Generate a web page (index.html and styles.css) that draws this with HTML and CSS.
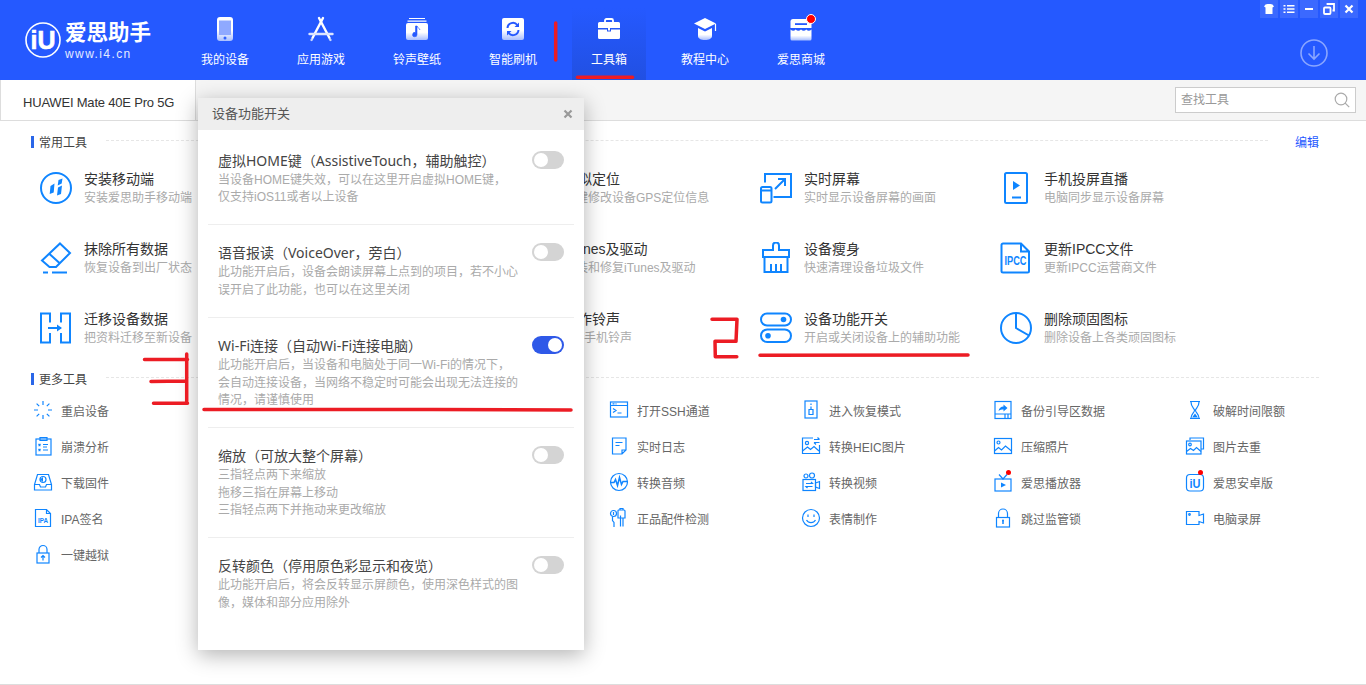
FILE: index.html
```html
<!DOCTYPE html>
<html lang="zh-CN">
<head>
<meta charset="UTF-8">
<meta name="viewport" content="width=device-width, initial-scale=1.0">
<title>爱思助手</title>
<link rel="stylesheet" href="styles.css">
</head>
<body>
<svg class="defs" width="0" height="0">
  <defs>
    <linearGradient id="navFade" x1="0" y1="0" x2="0" y2="1">
      <stop offset="0" stop-color="#fff"/>
      <stop offset="0.55" stop-color="#fff"/>
      <stop offset="1" stop-color="#a9bfff"/>
    </linearGradient>
  </defs>
</svg>

<header class="topbar">
  <div class="logo">
    <svg class="logo-mark" viewBox="0 0 36 36">
      <circle cx="18" cy="18" r="17" fill="none" stroke="#fff" stroke-width="1.600"/>
      <text x="18" y="27" text-anchor="middle" textLength="25" lengthAdjust="spacingAndGlyphs" class="logo-letters">iU</text>
    </svg>
    <div class="logo-text">
      <div class="logo-name">爱思助手</div>
      <div class="logo-url">www.i4.cn</div>
    </div>
  </div>
  <nav class="nav">
    <a class="nav-item">
      <svg viewBox="0 0 28 28"><rect x="6" y="2" width="16" height="24" rx="3" fill="url(#navFade)"/><rect x="8" y="5.500" width="12" height="14.500" fill="#8fa9ff"/><circle cx="14" cy="23" r="1.500" fill="#2f62ff"/></svg>
      <span>我的设备</span>
    </a>
    <a class="nav-item">
      <svg viewBox="0 0 28 28" fill="none" stroke-width="2.400" stroke-linecap="round"><path d="M16 3L5.500 23" stroke="#fff"/><path d="M12 3l10.500 20" stroke="#fff"/><path d="M2.500 19h23" stroke="#dbe4ff"/><path d="M5 24.500l-.5.500M23 24.500l.5.500" stroke="#c6d4ff"/></svg>
      <span>应用游戏</span>
    </a>
    <a class="nav-item">
      <svg viewBox="0 0 28 28"><path d="M6 3h16v1H6zM4.500 5.500h19v1.200h-19z" fill="#fff"/><rect x="3" y="8" width="22" height="17" rx="2" fill="url(#navFade)"/><path d="M14 11v8.500a2.200 2.200 0 1 1-1.500-2V11zM14 11c.5 2 2.500 2 3 4" fill="#2559ff" stroke="#2559ff" stroke-width=".6"/></svg>
      <span>铃声壁纸</span>
    </a>
    <a class="nav-item">
      <svg viewBox="0 0 28 28"><rect x="3" y="3" width="22" height="22" rx="2" fill="url(#navFade)"/><path d="M8.500 13a5.500 5.500 0 0 1 9.800-3M19.500 15a5.500 5.500 0 0 1-9.800 3" fill="none" stroke="#2559ff" stroke-width="2"/><path d="M20 7.500v4.500h-4.500zM8 20.500V16h4.500z" fill="#2559ff"/></svg>
      <span>智能刷机</span>
    </a>
    <a class="nav-item is-active">
      <svg viewBox="0 0 28 28"><path d="M10 7V5.500A1.500 1.500 0 0 1 11.500 4h5A1.500 1.500 0 0 1 18 5.500V7" fill="none" stroke="#fff" stroke-width="1.800"/><path d="M4.500 7h19A1.500 1.500 0 0 1 25 8.500V13H3V8.500A1.500 1.500 0 0 1 4.500 7zM3 14.500h9v2h4v-2h9v8A1.500 1.500 0 0 1 23.500 24h-19A1.500 1.500 0 0 1 3 22.500z" fill="#fff"/><rect x="13" y="12" width="2" height="3.500" fill="#fff"/></svg>
      <span>工具箱</span>
    </a>
    <a class="nav-item">
      <svg viewBox="0 0 28 28"><path d="M14 3l11 5.500L14 14 3 8.500z" fill="#fff"/><path d="M7 13l7 3.500 7-3.500v8c0 2.500-3 4-7 4s-7-1.500-7-4z" fill="url(#navFade)"/><path d="M24.500 9v7" stroke="#fff" stroke-width="1.200"/></svg>
      <span>教程中心</span>
    </a>
    <a class="nav-item">
      <svg viewBox="0 0 28 28"><path d="M6 4h16a2.500 2.500 0 0 1 2.500 2.500V13H3.500V6.500A2.500 2.500 0 0 1 6 4z" fill="#fff"/><rect x="8" y="8.200" width="12" height="1.800" fill="#2559ff"/><path d="M3.500 14.500c2 1.800 3.500 1.800 5.200 0 1.700 1.800 3.500 1.800 5.300 0 1.800 1.800 3.600 1.800 5.300 0 1.700 1.800 3.200 1.800 5.200 0V24a1.500 1.500 0 0 1-1.500 1.500H5A1.500 1.500 0 0 1 3.500 24z" fill="url(#navFade)"/></svg>
      <span>爱思商城</span>
      <i class="nav-dot"></i>
    </a>
  </nav>
  <div class="top-right">
    <div class="win-btns">
      <span class="win-btn"><svg viewBox="0 0 18 18"><path d="M5.500 4.500l2-.5h3l2 .5 1.500 2-1.500 1V14h-7V7.500L4 6.500z" fill="#fff"/></svg></span>
      <span class="win-btn"><svg viewBox="0 0 18 18"><path d="M3.500 5h2v1.600h-2zM7 5h7.500v1.600H7zM3.500 8.200h2v1.600h-2zM7 8.200h7.500v1.600H7zM3.500 11.400h2V13h-2zM7 11.400h7.500V13H7z" fill="#fff"/></svg></span>
      <span class="win-btn"><svg viewBox="0 0 18 18"><rect x="5" y="8" width="8" height="2" fill="#fff"/></svg></span>
      <span class="win-btn"><svg viewBox="0 0 18 18" fill="none" stroke="#fff" stroke-width="1.800"><rect x="4" y="7.500" width="6.500" height="6.500" rx="1"/><path d="M7.500 5V4h6.500v6.500h-1.500"/></svg></span>
      <span class="win-btn"><svg viewBox="0 0 18 18"><path d="M5.500 5.500l7 7M12.500 5.500l-7 7" stroke="#fff" stroke-width="2.200"/></svg></span>
    </div>
    <svg class="download" viewBox="0 0 28 28" fill="none" stroke="#8aa6ff" stroke-width="1.600"><circle cx="14" cy="14" r="13"/><path d="M14 7v13M8.500 14.500L14 20l5.500-5.500"/></svg>
  </div>
</header>

<div class="tabbar">
  <div class="tab">HUAWEI Mate 40E Pro 5G</div>
  <div class="search">
    <span class="search-hint">查找工具</span>
    <svg viewBox="0 0 16 16" fill="none" stroke="#aaa" stroke-width="1.200"><circle cx="7" cy="7" r="5.800"/><path d="M11.200 11.200l4 4"/></svg>
  </div>
</div>

<main class="main">
  <div class="sec-head">
    <span class="sec-tick"></span><span class="sec-name">常用工具</span><span class="sec-dash"></span><a class="sec-edit">编辑</a>
  </div>
  <div class="big-grid">
    <div class="tool">
      <svg viewBox="0 0 32 32" fill="none" stroke="#0f85ff" stroke-width="2"><circle cx="16" cy="16" r="15"/><path d="M10.500 14l4-2.500-.8 9-4 1.500zM18.500 8l4-1.500-.8 5-4 2zM18 15.500l4-2-1 8.500-4 1.500z" fill="#0f85ff" stroke="none"/></svg>
      <div><div class="tool-name">安装移动端</div><div class="tool-desc">安装爱思助手移动端</div></div>
    </div>
    <div class="tool"></div>
    <div class="tool">
      <div class="tool-gap"></div>
      <div><div class="tool-name">虚拟定位</div><div class="tool-desc">一键修改设备GPS定位信息</div></div>
    </div>
    <div class="tool">
      <svg viewBox="0 0 32 32" fill="none" stroke="#0f85ff" stroke-width="2"><path d="M5 10.500V2h26v23H13.500"/><path d="M15 17L25 7M18 7h7v7"/><rect x="1" y="15" width="10.500" height="15.500" rx="1.500"/><path d="M1 18.500h10.500"/></svg>
      <div><div class="tool-name">实时屏幕</div><div class="tool-desc">实时显示设备屏幕的画面</div></div>
    </div>
    <div class="tool">
      <svg viewBox="0 0 32 32" fill="none" stroke="#0f85ff" stroke-width="2"><rect x="5" y="1" width="22" height="30" rx="1.500"/><path d="M13 9l7 4.500-7 4.500z" fill="#0f85ff" stroke="none"/><path d="M12 25.500h9"/></svg>
      <div><div class="tool-name">手机投屏直播</div><div class="tool-desc">电脑同步显示设备屏幕</div></div>
    </div>

    <div class="tool">
      <svg viewBox="0 0 32 32" fill="none" stroke="#0f85ff" stroke-width="2"><path d="M20 1.500l10 9.500-14 14H9.500L2 18.500zM9 11.500L20 21.500"/><path d="M3 30.500h5M12 30.500h15"/></svg>
      <div><div class="tool-name">抹除所有数据</div><div class="tool-desc">恢复设备到出厂状态</div></div>
    </div>
    <div class="tool"></div>
    <div class="tool">
      <div class="tool-gap"></div>
      <div><div class="tool-name">iTunes及驱动</div><div class="tool-desc">安装和修复iTunes及驱动</div></div>
    </div>
    <div class="tool">
      <svg viewBox="0 0 32 32" fill="none" stroke="#0f85ff" stroke-width="2"><path d="M13 8V3.500a3 3 0 0 1 6 0V8h10v7H3V8zM4.500 15v15h23V15"/><path d="M11 30v-8M16 30v-8M21 30v-8"/></svg>
      <div><div class="tool-name">设备瘦身</div><div class="tool-desc">快速清理设备垃圾文件</div></div>
    </div>
    <div class="tool">
      <svg viewBox="0 0 32 32" fill="none" stroke="#0f85ff" stroke-width="2"><path d="M3 1.500h18l8 8V29a1.500 1.500 0 0 1-1.500 1.500H3A1.500 1.500 0 0 1 1.500 29V3A1.500 1.500 0 0 1 3 1.500zM21 1.500v8h8"/><text x="15.500" y="23" text-anchor="middle" textLength="22" lengthAdjust="spacingAndGlyphs" class="icon-label">IPCC</text></svg>
      <div><div class="tool-name">更新IPCC文件</div><div class="tool-desc">更新IPCC运营商文件</div></div>
    </div>

    <div class="tool">
      <svg viewBox="0 0 32 32" fill="none" stroke="#0f85ff" stroke-width="2"><path d="M10 10.500v-9H1v29h9V21M21 10.500v-9h9v29h-9V21M8 16h13"/><path d="M17 12.500l5 3.500-5 3.500z" fill="#0f85ff" stroke="none"/></svg>
      <div><div class="tool-name">迁移设备数据</div><div class="tool-desc">把资料迁移至新设备</div></div>
    </div>
    <div class="tool"></div>
    <div class="tool">
      <div class="tool-gap"></div>
      <div><div class="tool-name">制作铃声</div><div class="tool-desc">DIY手机铃声</div></div>
    </div>
    <div class="tool">
      <svg viewBox="0 0 32 32" fill="none" stroke="#0f85ff" stroke-width="2"><rect x="1" y="1.500" width="30" height="12" rx="6"/><rect x="1" y="17.500" width="30" height="12.500" rx="6.200"/><circle cx="23.500" cy="7.500" r="2.800" fill="#0f85ff" stroke="none"/><circle cx="8" cy="23.700" r="2.800" fill="#0f85ff" stroke="none"/></svg>
      <div><div class="tool-name">设备功能开关</div><div class="tool-desc">开启或关闭设备上的辅助功能</div></div>
    </div>
    <div class="tool">
      <svg viewBox="0 0 32 32" fill="none" stroke="#0f85ff" stroke-width="2"><circle cx="16" cy="16" r="15"/><path d="M16 1v15l13 7.500"/></svg>
      <div><div class="tool-name">删除顽固图标</div><div class="tool-desc">删除设备上各类顽固图标</div></div>
    </div>
  </div>

  <div class="sec-head sec-more">
    <span class="sec-tick"></span><span class="sec-name">更多工具</span><span class="sec-dash"></span>
  </div>
  <div class="small-grid">
    <div class="mini">
      <svg viewBox="0 0 20 20"><path d="M10 1v4M10 15v4M1 10h4M15 10h4M3.600 3.600l2.600 2.600M13.800 13.800l2.600 2.600M3.600 16.400l2.600-2.600M13.800 6.200l2.600-2.600"/></svg>
      <span>重启设备</span>
    </div>
    <div class="mini"></div>
    <div class="mini"></div>
    <div class="mini">
      <svg viewBox="0 0 20 20"><rect x="1.500" y="2" width="17" height="15"/><path d="M1.500 5.500h17M3.500 3.800h2M6.500 3.800h1M4 8.500l3 2-3 2M8.500 13h4"/></svg>
      <span>打开SSH通道</span>
    </div>
    <div class="mini">
      <svg viewBox="0 0 20 20"><rect x="4" y="1" width="12" height="17"/><path d="M10 3.500v1.500M10 6.500v3M8 9.500h4v5H8z"/></svg>
      <span>进入恢复模式</span>
    </div>
    <div class="mini">
      <svg viewBox="0 0 20 20"><rect x="2" y="1.500" width="16" height="17"/><path d="M2 14h16M12 14v4.500M15 14v4.500"/><path d="M5.500 11c.5-3 2.500-4.500 5-4.500V4.500l4 3.500-4 3.500V9.500c-2 0-3.500.3-5 1.500z" class="ic-fill"/></svg>
      <span>备份引导区数据</span>
    </div>
    <div class="mini">
      <svg viewBox="0 0 20 20"><path d="M5 1.500h10M5 18.500h10M6 2c0 5 3 6 3.500 8S6 14 6 18M14 2c0 5-3 6-3.500 8S14 14 14 18"/><path d="M7 17.500l3-4 3 4z" class="ic-fill"/></svg>
      <span>破解时间限额</span>
    </div>

    <div class="mini">
      <svg viewBox="0 0 20 20"><rect x="3" y="3" width="15" height="16"/><path d="M7 1.500h7v3H7zM5.500 8l2 2M7.500 8l-2 2M5.500 13l2 2M7.500 13l-2 2M10 8.500h5M10 11h4M10 14h5"/></svg>
      <span>崩溃分析</span>
    </div>
    <div class="mini"></div>
    <div class="mini"></div>
    <div class="mini">
      <svg viewBox="0 0 20 20"><path d="M17 2H3.500v16H13l4-4zM13 18v-4h4M6.500 6.500h7M6.500 9.500h4"/></svg>
      <span>实时日志</span>
    </div>
    <div class="mini">
      <svg viewBox="0 0 20 20"><path d="M12 2H1.500v15.500h17V9"/><path d="M1.500 15l5-4 3 2.500 3.500-3 5 4.500"/><circle cx="6" cy="7" r="1.600"/><path d="M13 3.500h5.500M16.500 1.500l2 2M18.500 6.500H13M15 8.500l-2-2"/></svg>
      <span>转换HEIC图片</span>
    </div>
    <div class="mini">
      <svg viewBox="0 0 20 20"><rect x="1.500" y="2.500" width="17" height="15"/><circle cx="5.500" cy="6.500" r="1.500"/><path d="M1.500 15l4-3.500 3 2.500 4-4 6 5"/></svg>
      <span>压缩照片</span>
    </div>
    <div class="mini">
      <svg viewBox="0 0 20 20"><path d="M5 4V2h13.500v11H16"/><rect x="1.500" y="5" width="14.500" height="13"/><circle cx="5" cy="8.500" r="1.300"/><path d="M1.500 15.500l4-3 3 2 3-3 4.500 4"/></svg>
      <span>图片去重</span>
    </div>

    <div class="mini">
      <svg viewBox="0 0 20 20"><path d="M4.500 2.500h11l3 10V18h-17v-5.500zM1.500 12.500h5l1 2.500h5l1-2.500h5"/><circle cx="10" cy="7.500" r="3"/><path d="M7 7.500l3-2.500v5z" class="ic-fill"/></svg>
      <span>下载固件</span>
    </div>
    <div class="mini"></div>
    <div class="mini"></div>
    <div class="mini">
      <svg viewBox="0 0 20 20"><circle cx="10" cy="10" r="8.500"/><path d="M1.500 10.500H5l1.500-3 2 6 2-8 2 7 1.500-3h4.500" class="ic-thick"/></svg>
      <span>转换音频</span>
    </div>
    <div class="mini">
      <svg viewBox="0 0 20 20"><rect x="2" y="7.500" width="12.500" height="11"/><path d="M14.500 11l4-1.500v7l-4-1.500zM5 11.500h6.500l-1.500-1.500M11.500 14.500H5l1.500 1.500"/><circle cx="5" cy="4" r="2"/><circle cx="11" cy="3.500" r="2.500"/></svg>
      <span>转换视频</span>
    </div>
    <div class="mini has-dot">
      <svg viewBox="0 0 20 20"><rect x="2" y="7" width="16" height="12"/><path d="M6 2.500L10 7l4-4.500"/><path d="M8 10.500l5 2.500-5 2.500z" class="ic-fill"/></svg>
      <span>爱思播放器</span>
    </div>
    <div class="mini has-dot">
      <svg viewBox="0 0 20 20"><rect x="1.500" y="2.500" width="17" height="16.500" rx="3.500"/><text x="10" y="15.500" text-anchor="middle" textLength="11" lengthAdjust="spacingAndGlyphs" class="icon-label-sm">iU</text></svg>
      <span>爱思安卓版</span>
    </div>

    <div class="mini">
      <svg viewBox="0 0 20 20"><path d="M2.500 1.500h11l4 4v13h-15zM13.500 1.500v4h4"/><text x="10" y="14.500" text-anchor="middle" textLength="10" lengthAdjust="spacingAndGlyphs" class="icon-label-xs">IPA</text></svg>
      <span>IPA签名</span>
    </div>
    <div class="mini"></div>
    <div class="mini"></div>
    <div class="mini">
      <svg viewBox="0 0 20 20"><circle cx="4.500" cy="5.500" r="3"/><path d="M3.500 8.500v4l1.500 2v4.500M11.500 18.500v-11M9.500 2h5.500a1 1 0 0 1 1 1v7h-7V3a1 1 0 0 1 .5-1zM14 10v8.500M11 2V.5h3V2M4.500 4v3"/></svg>
      <span>正品配件检测</span>
    </div>
    <div class="mini">
      <svg viewBox="0 0 20 20"><circle cx="10" cy="10" r="8.500"/><path d="M7 6.500v2.500M13 6.500v2.500M5.500 12c2 3.500 7 3.500 9 0"/></svg>
      <span>表情制作</span>
    </div>
    <div class="mini">
      <svg viewBox="0 0 20 20"><path d="M5.500 9.500V5.500a4.500 4.500 0 0 1 9 0v4"/><rect x="3.500" y="9.500" width="13" height="9.500"/><path d="M10 12.500v3.500" class="ic-thick"/><circle cx="10" cy="12.500" r="1" class="ic-fill"/></svg>
      <span>跳过监管锁</span>
    </div>
    <div class="mini">
      <svg viewBox="0 0 20 20"><path d="M1.500 3.500h12.500v4l4.500-1.500v9L14 13.500v3H1.500z"/><circle cx="4.500" cy="6.500" r=".8"/></svg>
      <span>电脑录屏</span>
    </div>

    <div class="mini">
      <svg viewBox="0 0 20 20"><path d="M6 9V5.500a4 4 0 0 1 8 0V9"/><rect x="4" y="9" width="12" height="10"/><path d="M10 16.500v-4.500M8 13.500l2-2 2 2"/></svg>
      <span>一键越狱</span>
    </div>
  </div>
</main>

<section class="dialog">
  <div class="dlg-head">
    <span class="dlg-title">设备功能开关</span>
    <svg class="dlg-close" viewBox="0 0 10 10"><path d="M1.500 1.500l7 7M8.500 1.500l-7 7"/></svg>
  </div>
  <div class="opt">
    <div class="opt-text">
      <div class="opt-title">虚拟HOME键（AssistiveTouch，辅助触控）</div>
      <div class="opt-desc">当设备HOME键失效，可以在这里开启虚拟HOME键，<br>仅支持iOS11或者以上设备</div>
    </div>
    <span class="switch"></span>
  </div>
  <div class="opt">
    <div class="opt-text">
      <div class="opt-title">语音报读（VoiceOver，旁白）</div>
      <div class="opt-desc">此功能开启后，设备会朗读屏幕上点到的项目，若不小心<br>误开启了此功能，也可以在这里关闭</div>
    </div>
    <span class="switch"></span>
  </div>
  <div class="opt">
    <div class="opt-text">
      <div class="opt-title">Wi-Fi连接（自动Wi-Fi连接电脑）</div>
      <div class="opt-desc">此功能开启后，当设备和电脑处于同一Wi-Fi的情况下，<br>会自动连接设备，当网络不稳定时可能会出现无法连接的<br>情况，请谨慎使用</div>
    </div>
    <span class="switch on"></span>
  </div>
  <div class="opt">
    <div class="opt-text">
      <div class="opt-title">缩放（可放大整个屏幕）</div>
      <div class="opt-desc">三指轻点两下来缩放<br>拖移三指在屏幕上移动<br>三指轻点两下并拖动来更改缩放</div>
    </div>
    <span class="switch"></span>
  </div>
  <div class="opt">
    <div class="opt-text">
      <div class="opt-title">反转颜色（停用原色彩显示和夜览）</div>
      <div class="opt-desc">此功能开启后，将会反转显示屏颜色，使用深色样式的图<br>像，媒体和部分应用除外</div>
    </div>
    <span class="switch"></span>
  </div>
</section>

<!-- red marks drawn over the screenshot -->
<svg class="marks" viewBox="0 0 1366 685" fill="none" stroke="#ec1c24" stroke-width="3.500" stroke-linecap="round" stroke-linejoin="round">
  <path d="M555.700 23v37"/>
  <path d="M577.500 77.300h55"/>
  <path d="M712 319.300h25l-1 22h-21l.3 15.500h21.500"/>
  <path d="M760 355.300c70 .5 140 .3 208-.3"/>
  <path d="M144.500 359.500h43M186.700 354v49M151 381.500l34-.5M153.500 403.300h34"/>
  <path d="M204 409.500c120 0 245 0 367 .4"/>
</svg>
</body>
</html>
```

FILE: styles.css
```css
body {
  margin: 0;
  position: relative;
  height: 685px;
  overflow: hidden;
  background-color: #fff;
  font-family: "Liberation Sans", "Noto Sans CJK SC", sans-serif;
  font-size: 12px;
  color: #333;
}
.defs {
  position: absolute;
}

/* top bar */
.topbar {
  display: flex;
  height: 80px;
  background-color: #2559ff;
  color: #fff;
}
.logo {
  display: flex;
  width: 152px;
  padding: 22px 0 0 25px;
  gap: 4px;
  flex-shrink: 0;
}
.logo-mark {
  width: 36px;
  height: 36px;
}
.logo-letters {
  font-family: "Liberation Sans", sans-serif;
  font-size: 25px;
  font-weight: bold;
  fill: #fff;
  stroke: #fff;
  stroke-width: 0.6px;
}
.logo-name {
  font-size: 21.500px;
  font-weight: bold;
  line-height: 22px;
  white-space: nowrap;
}
.logo-url {
  font-size: 12px;
  line-height: 16px;
  margin-top: 2px;
  letter-spacing: 1.400px;
  color: #e3eaff;
}
.nav {
  display: flex;
}
.nav-item {
  position: relative;
  width: 96px;
  display: flex;
  flex-direction: column;
  align-items: center;
  padding-top: 15px;
  box-sizing: border-box;
}
.nav-item svg {
  width: 28px;
  height: 28px;
}
.nav-item span {
  margin-top: 9px;
  line-height: 16px;
}
.nav-item.is-active::before {
  content: "";
  position: absolute;
  left: 11px;
  right: 11px;
  top: 8px;
  bottom: 0;
  background: linear-gradient(#2559ff, #2150e2);
}
.nav-item.is-active svg,
.nav-item.is-active span {
  position: relative;
}
.nav-dot {
  position: absolute;
  left: 53px;
  top: 14px;
  width: 8px;
  height: 8px;
  border-radius: 50%;
  background-color: #f00;
  border: 1px solid #fff;
}
.top-right {
  margin-left: auto;
  display: flex;
  flex-direction: column;
  align-items: flex-end;
  padding-right: 8px;
}
.win-btns {
  display: flex;
  gap: 2px;
}
.win-btn {
  width: 18px;
  height: 18px;
  background-color: rgba(255, 255, 255, 0.1);
}
.win-btn svg {
  display: block;
  width: 18px;
  height: 18px;
}
.download {
  width: 28px;
  height: 28px;
  margin: 21px 30px 0 0;
}

/* tab strip */
.tabbar {
  display: flex;
  justify-content: space-between;
  height: 41px;
  box-sizing: border-box;
  background-color: #f5f5f5;
  border-bottom: 1px solid #ddd;
}
.tab {
  width: 196px;
  height: 40px;
  box-sizing: border-box;
  padding: 14px 0 0 22px;
  background-color: #fff;
  border-left: 1px solid #ddd;
  border-right: 1px solid #ddd;
  font-size: 13px;
  line-height: 18px;
  letter-spacing: -0.200px;
}
.search {
  display: flex;
  align-items: center;
  justify-content: space-between;
  width: 181px;
  height: 26px;
  margin: 7px 10px 0 0;
  padding: 0 5px;
  box-sizing: border-box;
  background-color: #fff;
  border: 1px solid #ccc;
  color: #999;
}
.search-hint {
  margin-top: -3px;
}
.search svg {
  width: 16px;
  height: 16px;
}

/* tool lists */
.main {
  height: 564px;
  box-sizing: border-box;
  padding-top: 9px;
  border-bottom: 1px solid #ddd;
}
.sec-head {
  display: flex;
  align-items: center;
  height: 23px;
  padding: 0 47px 0 31px;
}
.sec-more {
  margin-top: 4px;
}
.sec-tick {
  width: 3px;
  height: 12px;
  background-color: #2a66e8;
  margin-right: 5px;
}
.sec-name {
  color: #444;
}
.sec-dash {
  flex: 1;
  margin: -2px 0 0 19px;
  border-top: 1px dashed #e6e6e6;
}
.sec-edit {
  margin-left: 27px;
  color: #2559ff;
}
.big-grid {
  display: grid;
  grid-template-columns: repeat(5, 240px);
  grid-auto-rows: 70px;
  margin-left: 40px;
}
.tool {
  display: flex;
  align-items: center;
  gap: 12px;
}
.tool svg {
  width: 32px;
  height: 32px;
  flex-shrink: 0;
}
.tool-gap {
  width: 32px;
}
.tool-name {
  font-size: 14px;
  line-height: 20px;
  color: #333;
}
.tool-desc {
  line-height: 18px;
  color: #aaa;
  white-space: nowrap;
}
.icon-label,
.icon-label-sm,
.icon-label-xs {
  font-family: "Liberation Sans", sans-serif;
  font-weight: bold;
  fill: #0f85ff;
  stroke: none;
}
.icon-label,
.icon-label-sm {
  font-size: 12px;
}
.icon-label-xs {
  font-size: 8px;
}
.small-grid {
  display: grid;
  grid-template-columns: repeat(7, 192px);
  grid-auto-rows: 36px;
  margin: 2px 0 0 33px;
}
.mini {
  position: relative;
  display: flex;
  align-items: center;
  gap: 8px;
  color: #666;
}
.mini svg {
  width: 20px;
  height: 20px;
  flex-shrink: 0;
  fill: none;
  stroke: #0f85ff;
  stroke-width: 1.200;
}
.mini .ic-fill {
  fill: #0f85ff;
  stroke: none;
}
.mini .ic-thick {
  stroke-width: 1.500;
}
.has-dot::after {
  content: "";
  position: absolute;
  left: 13px;
  top: 6px;
  width: 5px;
  height: 5px;
  border-radius: 50%;
  background-color: #f00;
}

/* dialog */
.dialog {
  position: absolute;
  left: 198px;
  top: 98px;
  width: 386px;
  height: 552px;
  background-color: #fff;
  box-shadow: 0 5px 20px rgba(0, 0, 0, 0.3);
}
.dlg-head {
  display: flex;
  align-items: center;
  justify-content: space-between;
  height: 32px;
  padding: 0 11px 0 14px;
  background-color: #eee;
  font-size: 13px;
  color: #555;
}
.dlg-title {
  margin-top: -4px;
}
.dlg-close {
  width: 10px;
  height: 10px;
  fill: none;
  stroke: #999;
  stroke-width: 2.200;
}
.opt {
  display: flex;
  justify-content: space-between;
  margin: 0 10px;
  padding: 18.500px 10px 17.600px;
  border-bottom: 1px solid #eee;
}
.dlg-head + .opt {
  padding-top: 21px;
  padding-bottom: 17.340px;
}
.opt:last-child {
  border-bottom: none;
}
.opt-title {
  font-family: "Noto Sans", "Noto Sans CJK SC", sans-serif;
  font-size: 14px;
  line-height: 20px;
  color: #444;
  white-space: nowrap;
}
.opt-desc {
  margin-top: 1px;
  line-height: 17.330px;
  color: #aaa;
  white-space: nowrap;
}
.switch {
  position: relative;
  width: 32px;
  height: 18px;
  border-radius: 9px;
  background-color: #d4d4d4;
  flex-shrink: 0;
}
.switch::after {
  content: "";
  position: absolute;
  left: 2px;
  top: 2px;
  width: 14px;
  height: 14px;
  border-radius: 50%;
  background-color: #fff;
}
.switch.on {
  background-color: #2f59e8;
}
.switch.on::after {
  left: 16px;
}

/* hand-drawn marks */
.marks {
  position: absolute;
  left: 0;
  top: 0;
  width: 1366px;
  height: 685px;
  pointer-events: none;
}
```
